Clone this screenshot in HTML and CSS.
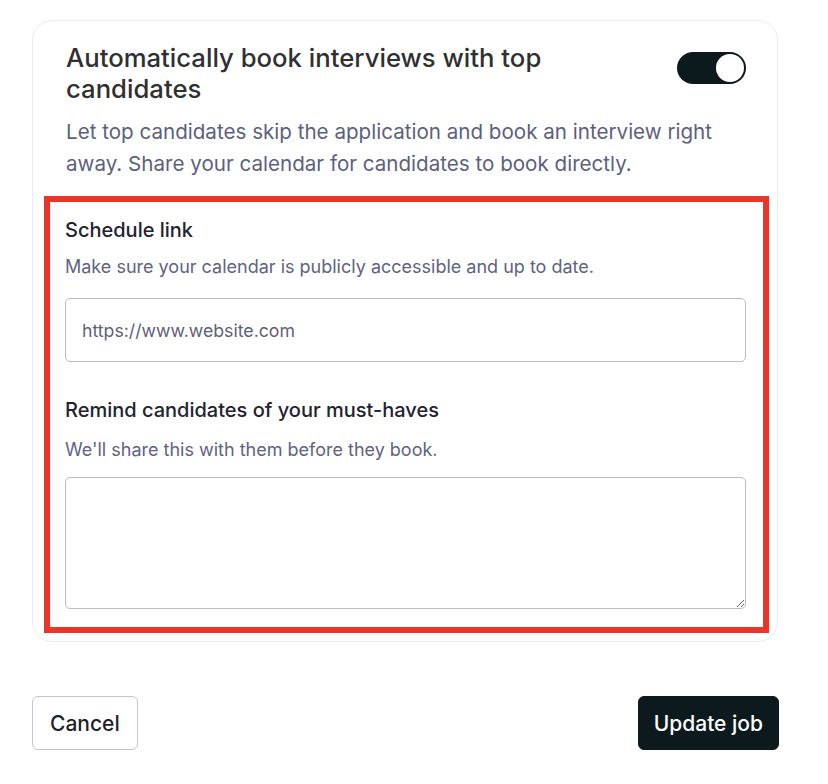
FILE: index.html
```html
<!DOCTYPE html>
<html lang="en">
<head>
<meta charset="utf-8">
<title>Automatically book interviews</title>
<link rel="stylesheet" href="styles.css">
</head>
<body>
<div class="page">
  <div class="card">
    <div class="card-head">
      <h2 class="title">Automatically book interviews with top candidates</h2>
      <div class="toggle" role="switch" aria-checked="true"><span class="knob"></span></div>
    </div>
    <p class="desc">Let top candidates skip the application and book an interview right away. Share your calendar for candidates to book directly.</p>
    <div class="section">
      <div class="field">
        <label class="label" for="link">Schedule link</label>
        <p class="hint">Make sure your calendar is publicly accessible and up to date.</p>
        <input id="link" class="input" type="text" placeholder="https://www.website.com">
      </div>
      <div class="field field-2">
        <label class="label" for="remind">Remind candidates of your must-haves</label>
        <p class="hint hint-2">We'll share this with them before they book.</p>
        <textarea id="remind" class="textarea"></textarea>
      </div>
    </div>
  </div>
  <div class="actions">
    <button class="btn btn-secondary">Cancel</button>
    <button class="btn btn-primary">Update job</button>
  </div>
</div>
</body>
</html>
```
FILE: styles.css
```css
html, body {
  margin: 0;
  padding: 0;
  background: #ffffff;
}
body {
  font-family: Inter, "Noto Sans", "Liberation Sans", sans-serif;
  color: #1f1f2b;
}
.page {
  width: 747px;
  padding: 20px 0 0 32px;
}
.card {
  border: 1px solid #ebebf3;
  border-radius: 20px;
  padding: 21px 0 8px 0;
  width: 744px;
}
.card-head {
  display: flex;
  justify-content: space-between;
  align-items: flex-start;
  padding: 0 31px 0 33px;
}
.title {
  margin: 0;
  max-width: 560px;
  font-size: 25.7px;
  line-height: 31px;
  font-weight: 500;
  color: #303033;
}
.toggle {
  display: flex;
  justify-content: flex-end;
  align-items: center;
  box-sizing: border-box;
  width: 69px;
  height: 32px;
  margin-top: 10px;
  padding: 2px;
  border-radius: 16px;
  background: #0c1a1e;
}
.knob {
  width: 28px;
  height: 28px;
  border-radius: 50%;
  background: #ffffff;
}
.desc {
  margin: 12px 0 16px 0;
  padding: 0 31px 0 33px;
  font-size: 20.6px;
  line-height: 32px;
  color: #5d5f7e;
}
.section {
  margin: 0 8px 0 11px;
  border: 6px solid #ec3428;
  padding: 14px 17px 18px 15px;
}
.field {
  display: flex;
  flex-direction: column;
}
.field-2 {
  margin-top: 34px;
}
.label {
  font-size: 20px;
  line-height: 28px;
  font-weight: 500;
  color: #222230;
}
.hint {
  margin: 11px 0 19px 0;
  font-size: 18px;
  line-height: 24px;
  color: #606382;
}
.hint-2 {
  margin: 14px 0 15px 0;
}
.input, .textarea {
  box-sizing: border-box;
  width: 100%;
  border: 1px solid #bcbacd;
  border-radius: 5px;
  background: #ffffff;
  font-family: inherit;
  font-size: 17.7px;
  color: #222230;
  outline: none;
}
.input {
  height: 64px;
  padding: 0 16px;
}
.input::placeholder {
  color: #5f5f78;
}
.textarea {
  display: block;
  height: 132px;
  padding: 12px 16px;
  resize: vertical;
}
.actions {
  display: flex;
  justify-content: space-between;
  margin-top: 54px;
}
.btn {
  box-sizing: border-box;
  height: 54px;
  border-radius: 6px;
  font-family: inherit;
  font-size: 21px;
  font-weight: 500;
  padding: 0 17px;
  cursor: pointer;
}
.btn-secondary {
  background: #ffffff;
  border: 1px solid #c4c3d4;
  color: #1f1f2b;
}
.btn-primary {
  background: #0c1a1e;
  border: 1px solid #0c1a1e;
  color: #ffffff;
  padding: 0 15px;
}
```
